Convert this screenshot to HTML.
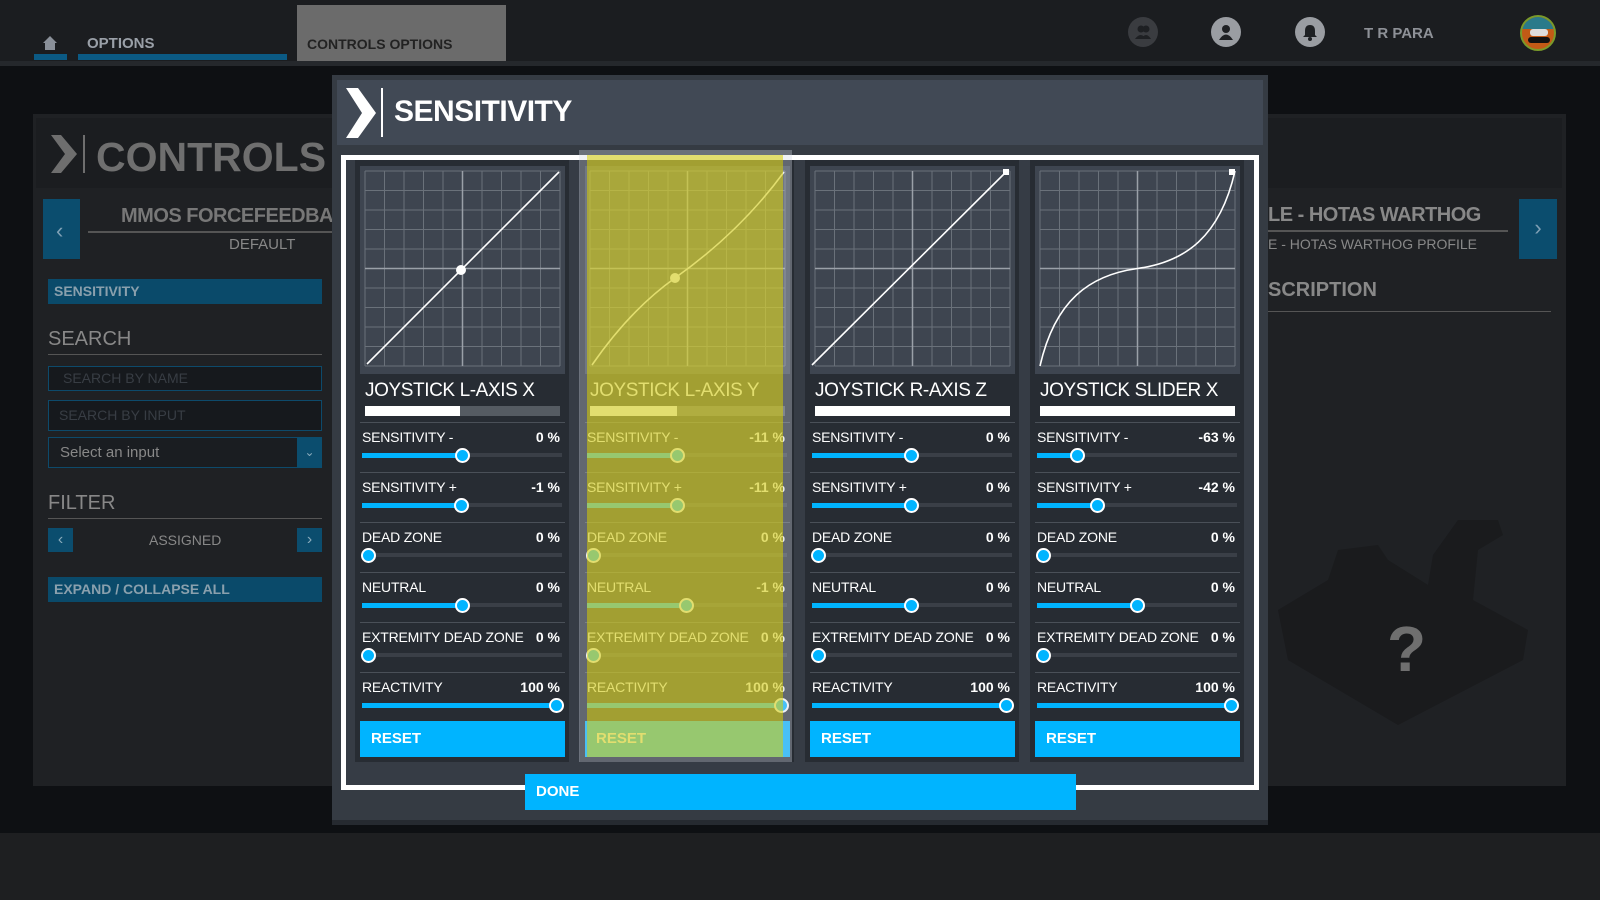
<!DOCTYPE html>
<html><head><meta charset="utf-8"><style>
*{margin:0;padding:0;box-sizing:border-box}
body{width:1600px;height:900px;overflow:hidden;background:#0e1013;font-family:"Liberation Sans",sans-serif;position:relative}
.a{position:absolute}
.lbl{position:absolute;font-size:14px;color:#fff;white-space:nowrap;line-height:18px;letter-spacing:-0.2px}
.val{position:absolute;font-size:14px;font-weight:bold;color:#fff;text-align:right;width:60px;line-height:18px}
.trk{position:absolute;height:4px;background:#3a3f47;width:200px}
.fil{position:absolute;height:5px;background:#00b4ff}
.kn{position:absolute;width:15px;height:15px;border-radius:50%;background:#00b4ff;border:2px solid #fff}
.sep{position:absolute;height:1px;background:#4a5058;width:205px}
.rst{position:absolute;top:721px;width:205px;height:36px;background:#00b4ff;color:#fff;font-weight:bold;font-size:15px;line-height:36px;padding-left:11px}
.ttl{position:absolute;top:380px;font-size:19px;color:#fff;white-space:nowrap;letter-spacing:-0.4px}
.bar{position:absolute;top:406px;height:10px;width:195px;background:#555b62}
.col{position:absolute;top:160px;width:214px;height:602px;background:#272c33}
</style></head><body>
<div class="a" style="left:0;top:0;width:1600px;height:61px;background:#1b1d20"></div>
<div class="a" style="left:0;top:61px;width:1600px;height:5px;background:#25282c"></div>
<svg class="a" style="left:42px;top:35px" width="16" height="16" viewBox="0 0 16 16"><path d="M8 1 L15 8 L13 8 L13 15 L3 15 L3 8 L1 8 Z" fill="#8a9099"/></svg>
<div class="a" style="left:34px;top:54px;width:33px;height:6px;background:#0b5a84"></div>
<div class="a" style="left:87px;top:35px;font-size:15px;font-weight:bold;color:#9aa0a8">OPTIONS</div>
<div class="a" style="left:78px;top:54px;width:209px;height:6px;background:#0b5a84"></div>
<div class="a" style="left:297px;top:5px;width:209px;height:56px;background:#6b6b6b"></div>
<div class="a" style="left:307px;top:36px;font-size:14px;font-weight:bold;color:#222">CONTROLS OPTIONS</div>
<div class="a" style="left:1128px;top:17px;width:30px;height:30px;border-radius:50%;background:#3a3c40"></div>
<svg class="a" style="left:1133px;top:22px" width="20" height="20" viewBox="0 0 20 20"><circle cx="8" cy="7" r="3.5" fill="#1e2023"/><circle cx="13" cy="7" r="3.5" fill="#1e2023"/><path d="M2 17 Q8 9 13 17Z M8 17 Q13 9 18 17Z" fill="#1e2023"/></svg>
<div class="a" style="left:1211px;top:17px;width:30px;height:30px;border-radius:50%;background:#9a9da2"></div>
<svg class="a" style="left:1216px;top:22px" width="20" height="20" viewBox="0 0 20 20"><circle cx="10" cy="7" r="4" fill="#1e2023"/><path d="M3 18 Q10 7 17 18Z" fill="#1e2023"/></svg>
<div class="a" style="left:1295px;top:17px;width:30px;height:30px;border-radius:50%;background:#9a9da2"></div>
<svg class="a" style="left:1300px;top:22px" width="20" height="20" viewBox="0 0 20 20"><path d="M10 3 Q15 3 15 9 L15 13 L17 15 L3 15 L5 13 L5 9 Q5 3 10 3Z" fill="#1e2023"/><circle cx="10" cy="17" r="2" fill="#1e2023"/></svg>
<div class="a" style="left:1364px;top:25px;font-size:15px;font-weight:bold;color:#8e9197">T R PARA</div>
<div class="a" style="left:1520px;top:15px;width:36px;height:36px;border-radius:50%;background:#c25a16;border:2px solid #7a9a2a;overflow:hidden">
<div class="a" style="left:0;top:0;width:36px;height:12px;background:#2a7a8a"></div>
<div class="a" style="left:8px;top:12px;width:18px;height:7px;background:#ddd;border-radius:3px"></div>
<div class="a" style="left:6px;top:20px;width:22px;height:6px;background:#111;border-radius:4px"></div></div>
<div class="a" style="left:33px;top:114px;width:299px;height:672px;background:#1f2124"></div>
<div class="a" style="left:36px;top:118px;width:296px;height:70px;background:#1b1d20"></div>
<svg class="a" style="left:51px;top:135px" width="26" height="38" viewBox="0 0 26 38"><path d="M0 0 L10 0 L26 19 L10 38 L0 38 L14 19Z" fill="#6e6e6e"/></svg>
<div class="a" style="left:83px;top:135px;width:2px;height:38px;background:#6e6e6e"></div>
<div class="a" style="left:96px;top:134px;font-size:41px;font-weight:bold;color:#6f6f6f;white-space:nowrap;width:236px;overflow:hidden">CONTROLS OPTIONS</div>
<div class="a" style="left:43px;top:199px;width:37px;height:60px;background:#0b4d6e"></div>
<div class="a" style="left:56px;top:218px;color:#7fa0b5;font-size:22px">&#8249;</div>
<div class="a" style="left:121px;top:205px;font-size:20px;font-weight:bold;color:#777;white-space:nowrap;width:211px;overflow:hidden;letter-spacing:-0.5px">MMOS FORCEFEEDBACK</div>
<div class="a" style="left:88px;top:231px;width:244px;height:2px;background:#555"></div>
<div class="a" style="left:229px;top:236px;font-size:15px;color:#888">DEFAULT</div>
<div class="a" style="left:48px;top:279px;width:274px;height:25px;background:#0a4a6a;color:#8aa0ad;font-weight:bold;font-size:14px;line-height:25px;padding-left:6px">SENSITIVITY</div>
<div class="a" style="left:48px;top:328px;font-size:20px;color:#888">SEARCH</div>
<div class="a" style="left:48px;top:354px;width:274px;height:1px;background:#555"></div>
<div class="a" style="left:48px;top:366px;width:274px;height:25px;border:1px solid #0d4a6b;background:#16191d;color:#383d44;font-size:14px;line-height:23px;padding-left:14px">SEARCH BY NAME</div>
<div class="a" style="left:48px;top:400px;width:274px;height:31px;border:1px solid #0d4a6b;background:#16191d;color:#383d44;font-size:14px;line-height:29px;padding-left:10px">SEARCH BY INPUT</div>
<div class="a" style="left:48px;top:437px;width:274px;height:31px;border:1px solid #0d4a6b;background:#1a1d21;color:#888;font-size:15px;line-height:29px;padding-left:11px">Select an input</div>
<div class="a" style="left:297px;top:437px;width:25px;height:31px;background:#0b4d6e;color:#8ab;text-align:center;line-height:31px;font-size:12px">&#8964;</div>
<div class="a" style="left:48px;top:492px;font-size:20px;color:#888">FILTER</div>
<div class="a" style="left:48px;top:518px;width:274px;height:1px;background:#555"></div>
<div class="a" style="left:48px;top:528px;width:25px;height:24px;background:#0b4d6e;color:#8ab;text-align:center;line-height:23px;font-size:16px">&#8249;</div>
<div class="a" style="left:297px;top:528px;width:25px;height:24px;background:#0b4d6e;color:#8ab;text-align:center;line-height:23px;font-size:16px">&#8250;</div>
<div class="a" style="left:149px;top:532px;font-size:14px;color:#888">ASSIGNED</div>
<div class="a" style="left:48px;top:577px;width:274px;height:25px;background:#0a4a6a;color:#8aa0ad;font-weight:bold;font-size:14px;line-height:25px;padding-left:6px">EXPAND / COLLAPSE ALL</div>
<div class="a" style="left:1268px;top:114px;width:298px;height:672px;background:#1f2124"></div>
<div class="a" style="left:1268px;top:118px;width:294px;height:70px;background:#1b1d20"></div>
<div class="a" style="left:1268px;top:204px;font-size:20px;font-weight:bold;color:#888;white-space:nowrap;letter-spacing:-0.5px">LE - HOTAS WARTHOG</div>
<div class="a" style="left:1268px;top:230px;width:240px;height:2px;background:#555"></div>
<div class="a" style="left:1268px;top:236px;font-size:14px;color:#888;white-space:nowrap">E - HOTAS WARTHOG PROFILE</div>
<div class="a" style="left:1519px;top:199px;width:38px;height:60px;background:#0b4d6e;color:#7fa0b5;font-size:22px;text-align:center;line-height:58px">&#8250;</div>
<div class="a" style="left:1268px;top:279px;font-size:20px;font-weight:bold;color:#888">SCRIPTION</div>
<div class="a" style="left:1268px;top:311px;width:283px;height:1px;background:#555"></div>
<svg class="a" style="left:1268px;top:500px" width="290" height="290"><path d="M10 110 L60 80 L70 50 L110 45 L120 60 L160 85 L165 55 L190 20 L230 20 L235 35 L210 50 L205 100 L260 130 L255 160 L130 225 L20 160Z" fill="#1a1b1d"/></svg>
<div class="a" style="left:1387px;top:612px;font-size:64px;font-weight:bold;color:#6f6f6f">?</div>
<div class="a" style="left:0;top:833px;width:1600px;height:67px;background:#1e1f21"></div>
<div class="a" style="left:332px;top:75px;width:936px;height:750px;background:#353b43"></div>
<div class="a" style="left:332px;top:820px;width:936px;height:5px;background:#262a30"></div>
<div class="a" style="left:337px;top:80px;width:926px;height:65px;background:#414955"></div>
<svg class="a" style="left:346px;top:88px" width="30" height="50" viewBox="0 0 30 50"><path d="M0 0 L12 0 L30 25 L12 50 L0 50 L16 25Z" fill="#fff"/></svg>
<div class="a" style="left:381px;top:88px;width:2px;height:49px;background:#fff"></div>
<div class="a" style="left:394px;top:95px;font-size:30px;font-weight:bold;color:#fff;letter-spacing:-0.5px">SENSITIVITY</div>
<div class="a" style="left:341px;top:155px;width:918px;height:635px;border:5px solid #fff;background:#363c45"></div>

<div class="col" style="left:355px"></div>
<div class="col" style="left:580px"></div>
<div class="col" style="left:805px"></div>
<div class="col" style="left:1030px"></div>

<svg class="a" style="left:0;top:0" width="1600" height="420">
<rect x="360" y="166" width="205" height="208" fill="#3e4550"/>
<rect x="585" y="166" width="205" height="208" fill="#3e4550"/>
<rect x="810" y="166" width="205" height="208" fill="#3e4550"/>
<rect x="1035" y="166" width="205" height="208" fill="#3e4550"/>
<g stroke="#6a717a" stroke-width="1">
<path d="M365 171V366M384.5 171V366M404 171V366M423.5 171V366M443 171V366M482 171V366M501.5 171V366M521 171V366M540.5 171V366M560 171V366 M365 171H560M365 190.5H560M365 210H560M365 229.5H560M365 249H560M365 288H560M365 307.5H560M365 327H560M365 346.5H560M365 366H560"/>
<path d="M590 171V366M609.5 171V366M629 171V366M648.5 171V366M668 171V366M707 171V366M726.5 171V366M746 171V366M765.5 171V366M785 171V366 M590 171H785M590 190.5H785M590 210H785M590 229.5H785M590 249H785M590 288H785M590 307.5H785M590 327H785M590 346.5H785M590 366H785"/>
<path d="M815 171V366M834.5 171V366M854 171V366M873.5 171V366M893 171V366M932 171V366M951.5 171V366M971 171V366M990.5 171V366M1010 171V366 M815 171H1010M815 190.5H1010M815 210H1010M815 229.5H1010M815 249H1010M815 288H1010M815 307.5H1010M815 327H1010M815 346.5H1010M815 366H1010"/>
<path d="M1040 171V366M1059.5 171V366M1079 171V366M1098.5 171V366M1118 171V366M1157 171V366M1176.5 171V366M1196 171V366M1215.5 171V366M1235 171V366 M1040 171H1235M1040 190.5H1235M1040 210H1235M1040 229.5H1235M1040 249H1235M1040 288H1235M1040 307.5H1235M1040 327H1235M1040 346.5H1235M1040 366H1235"/>
</g>
<g stroke="#9aa0a8" stroke-width="1.5"><path d="M462.5 171V366M365 268.5H560M687.5 171V366M590 268.5H785M912.5 171V366M815 268.5H1010M1137.5 171V366M1040 268.5H1235"/></g>
<g stroke="#fff" stroke-width="1.6" fill="none">
<path d="M367 364 L559 172"/>
<path d="M592 365 Q630 310 675 278 Q740 232 784 172"/>
<path d="M812 365 L1006 172"/>
<path d="M1040 366 C1055 300 1090 275 1137.5 268.5 C1185 262 1220 237 1235 171"/>
</g>
<circle cx="461" cy="270" r="5" fill="#fff"/><circle cx="675" cy="278" r="5" fill="#fff"/>
<rect x="1003" y="169" width="6" height="6" fill="#fff"/><rect x="1229" y="169" width="6" height="6" fill="#fff"/>
</svg>

<div class="ttl" style="left:365px">JOYSTICK L-AXIS X</div>
<div class="ttl" style="left:590px">JOYSTICK L-AXIS Y</div>
<div class="ttl" style="left:815px">JOYSTICK R-AXIS Z</div>
<div class="ttl" style="left:1040px">JOYSTICK SLIDER X</div>
<div class="bar" style="left:365px"><div class="a" style="left:0;top:0;width:95px;height:10px;background:#fff"></div></div>
<div class="bar" style="left:590px"><div class="a" style="left:0;top:0;width:87px;height:10px;background:#fff"></div></div>
<div class="bar" style="left:815px;background:#fff"></div>
<div class="bar" style="left:1040px;background:#fff"></div>

<div class="sep" style="left:360px;top:422px"></div><div class="sep" style="left:360px;top:472px"></div><div class="sep" style="left:360px;top:522px"></div><div class="sep" style="left:360px;top:572px"></div><div class="sep" style="left:360px;top:622px"></div><div class="sep" style="left:360px;top:672px"></div>
<div class="sep" style="left:585px;top:422px"></div><div class="sep" style="left:585px;top:472px"></div><div class="sep" style="left:585px;top:522px"></div><div class="sep" style="left:585px;top:572px"></div><div class="sep" style="left:585px;top:622px"></div><div class="sep" style="left:585px;top:672px"></div>
<div class="sep" style="left:810px;top:422px"></div><div class="sep" style="left:810px;top:472px"></div><div class="sep" style="left:810px;top:522px"></div><div class="sep" style="left:810px;top:572px"></div><div class="sep" style="left:810px;top:622px"></div><div class="sep" style="left:810px;top:672px"></div>
<div class="sep" style="left:1035px;top:422px"></div><div class="sep" style="left:1035px;top:472px"></div><div class="sep" style="left:1035px;top:522px"></div><div class="sep" style="left:1035px;top:572px"></div><div class="sep" style="left:1035px;top:622px"></div><div class="sep" style="left:1035px;top:672px"></div>

<div class="lbl" style="left:362px;top:428px">SENSITIVITY -</div><div class="lbl" style="left:362px;top:478px">SENSITIVITY +</div><div class="lbl" style="left:362px;top:528px">DEAD ZONE</div><div class="lbl" style="left:362px;top:578px">NEUTRAL</div><div class="lbl" style="left:362px;top:628px">EXTREMITY DEAD ZONE</div><div class="lbl" style="left:362px;top:678px">REACTIVITY</div>
<div class="lbl" style="left:587px;top:428px">SENSITIVITY -</div><div class="lbl" style="left:587px;top:478px">SENSITIVITY +</div><div class="lbl" style="left:587px;top:528px">DEAD ZONE</div><div class="lbl" style="left:587px;top:578px">NEUTRAL</div><div class="lbl" style="left:587px;top:628px">EXTREMITY DEAD ZONE</div><div class="lbl" style="left:587px;top:678px">REACTIVITY</div>
<div class="lbl" style="left:812px;top:428px">SENSITIVITY -</div><div class="lbl" style="left:812px;top:478px">SENSITIVITY +</div><div class="lbl" style="left:812px;top:528px">DEAD ZONE</div><div class="lbl" style="left:812px;top:578px">NEUTRAL</div><div class="lbl" style="left:812px;top:628px">EXTREMITY DEAD ZONE</div><div class="lbl" style="left:812px;top:678px">REACTIVITY</div>
<div class="lbl" style="left:1037px;top:428px">SENSITIVITY -</div><div class="lbl" style="left:1037px;top:478px">SENSITIVITY +</div><div class="lbl" style="left:1037px;top:528px">DEAD ZONE</div><div class="lbl" style="left:1037px;top:578px">NEUTRAL</div><div class="lbl" style="left:1037px;top:628px">EXTREMITY DEAD ZONE</div><div class="lbl" style="left:1037px;top:678px">REACTIVITY</div>

<div class="val" style="left:500px;top:428px">0 %</div><div class="val" style="left:500px;top:478px">-1 %</div><div class="val" style="left:500px;top:528px">0 %</div><div class="val" style="left:500px;top:578px">0 %</div><div class="val" style="left:500px;top:628px">0 %</div><div class="val" style="left:500px;top:678px">100 %</div>
<div class="val" style="left:725px;top:428px">-11 %</div><div class="val" style="left:725px;top:478px">-11 %</div><div class="val" style="left:725px;top:528px">0 %</div><div class="val" style="left:725px;top:578px">-1 %</div><div class="val" style="left:725px;top:628px">0 %</div><div class="val" style="left:725px;top:678px">100 %</div>
<div class="val" style="left:950px;top:428px">0 %</div><div class="val" style="left:950px;top:478px">0 %</div><div class="val" style="left:950px;top:528px">0 %</div><div class="val" style="left:950px;top:578px">0 %</div><div class="val" style="left:950px;top:628px">0 %</div><div class="val" style="left:950px;top:678px">100 %</div>
<div class="val" style="left:1175px;top:428px">-63 %</div><div class="val" style="left:1175px;top:478px">-42 %</div><div class="val" style="left:1175px;top:528px">0 %</div><div class="val" style="left:1175px;top:578px">0 %</div><div class="val" style="left:1175px;top:628px">0 %</div><div class="val" style="left:1175px;top:678px">100 %</div>

<div class="trk" style="left:362px;top:453px"></div><div class="trk" style="left:362px;top:503px"></div><div class="trk" style="left:362px;top:553px"></div><div class="trk" style="left:362px;top:603px"></div><div class="trk" style="left:362px;top:653px"></div><div class="trk" style="left:362px;top:703px"></div>
<div class="trk" style="left:587px;top:453px"></div><div class="trk" style="left:587px;top:503px"></div><div class="trk" style="left:587px;top:553px"></div><div class="trk" style="left:587px;top:603px"></div><div class="trk" style="left:587px;top:653px"></div><div class="trk" style="left:587px;top:703px"></div>
<div class="trk" style="left:812px;top:453px"></div><div class="trk" style="left:812px;top:503px"></div><div class="trk" style="left:812px;top:553px"></div><div class="trk" style="left:812px;top:603px"></div><div class="trk" style="left:812px;top:653px"></div><div class="trk" style="left:812px;top:703px"></div>
<div class="trk" style="left:1037px;top:453px"></div><div class="trk" style="left:1037px;top:503px"></div><div class="trk" style="left:1037px;top:553px"></div><div class="trk" style="left:1037px;top:603px"></div><div class="trk" style="left:1037px;top:653px"></div><div class="trk" style="left:1037px;top:703px"></div>
<div class="fil" style="left:362px;top:453px;width:100px"></div><div class="fil" style="left:362px;top:503px;width:99px"></div><div class="fil" style="left:362px;top:603px;width:100px"></div><div class="fil" style="left:362px;top:703px;width:194px"></div>
<div class="fil" style="left:587px;top:453px;width:90px"></div><div class="fil" style="left:587px;top:503px;width:90px"></div><div class="fil" style="left:587px;top:603px;width:99px"></div><div class="fil" style="left:587px;top:703px;width:194px"></div>
<div class="fil" style="left:812px;top:453px;width:99px"></div><div class="fil" style="left:812px;top:503px;width:99px"></div><div class="fil" style="left:812px;top:603px;width:99px"></div><div class="fil" style="left:812px;top:703px;width:194px"></div>
<div class="fil" style="left:1037px;top:453px;width:40px"></div><div class="fil" style="left:1037px;top:503px;width:60px"></div><div class="fil" style="left:1037px;top:603px;width:100px"></div><div class="fil" style="left:1037px;top:703px;width:194px"></div>
<div class="kn" style="left:455px;top:448px"></div><div class="kn" style="left:454px;top:498px"></div><div class="kn" style="left:361px;top:548px"></div><div class="kn" style="left:455px;top:598px"></div><div class="kn" style="left:361px;top:648px"></div><div class="kn" style="left:549px;top:698px"></div>
<div class="kn" style="left:670px;top:448px"></div><div class="kn" style="left:670px;top:498px"></div><div class="kn" style="left:586px;top:548px"></div><div class="kn" style="left:679px;top:598px"></div><div class="kn" style="left:586px;top:648px"></div><div class="kn" style="left:774px;top:698px"></div>
<div class="kn" style="left:904px;top:448px"></div><div class="kn" style="left:904px;top:498px"></div><div class="kn" style="left:811px;top:548px"></div><div class="kn" style="left:904px;top:598px"></div><div class="kn" style="left:811px;top:648px"></div><div class="kn" style="left:999px;top:698px"></div>
<div class="kn" style="left:1070px;top:448px"></div><div class="kn" style="left:1090px;top:498px"></div><div class="kn" style="left:1036px;top:548px"></div><div class="kn" style="left:1130px;top:598px"></div><div class="kn" style="left:1036px;top:648px"></div><div class="kn" style="left:1224px;top:698px"></div>

<div class="rst" style="left:360px">RESET</div>
<div class="rst" style="left:585px">RESET</div>
<div class="rst" style="left:810px">RESET</div>
<div class="rst" style="left:1035px">RESET</div>

<div class="a" style="left:579px;top:150px;width:213px;height:612px;background:rgba(210,215,225,0.35)"></div>
<div class="a" style="left:587px;top:155px;width:196px;height:602px;background:rgba(215,205,0,0.55)"></div>

<div class="a" style="left:525px;top:774px;width:551px;height:36px;background:#00b4ff;color:#fff;font-weight:bold;font-size:15px;line-height:36px;padding-left:11px">DONE</div>
</body></html>
